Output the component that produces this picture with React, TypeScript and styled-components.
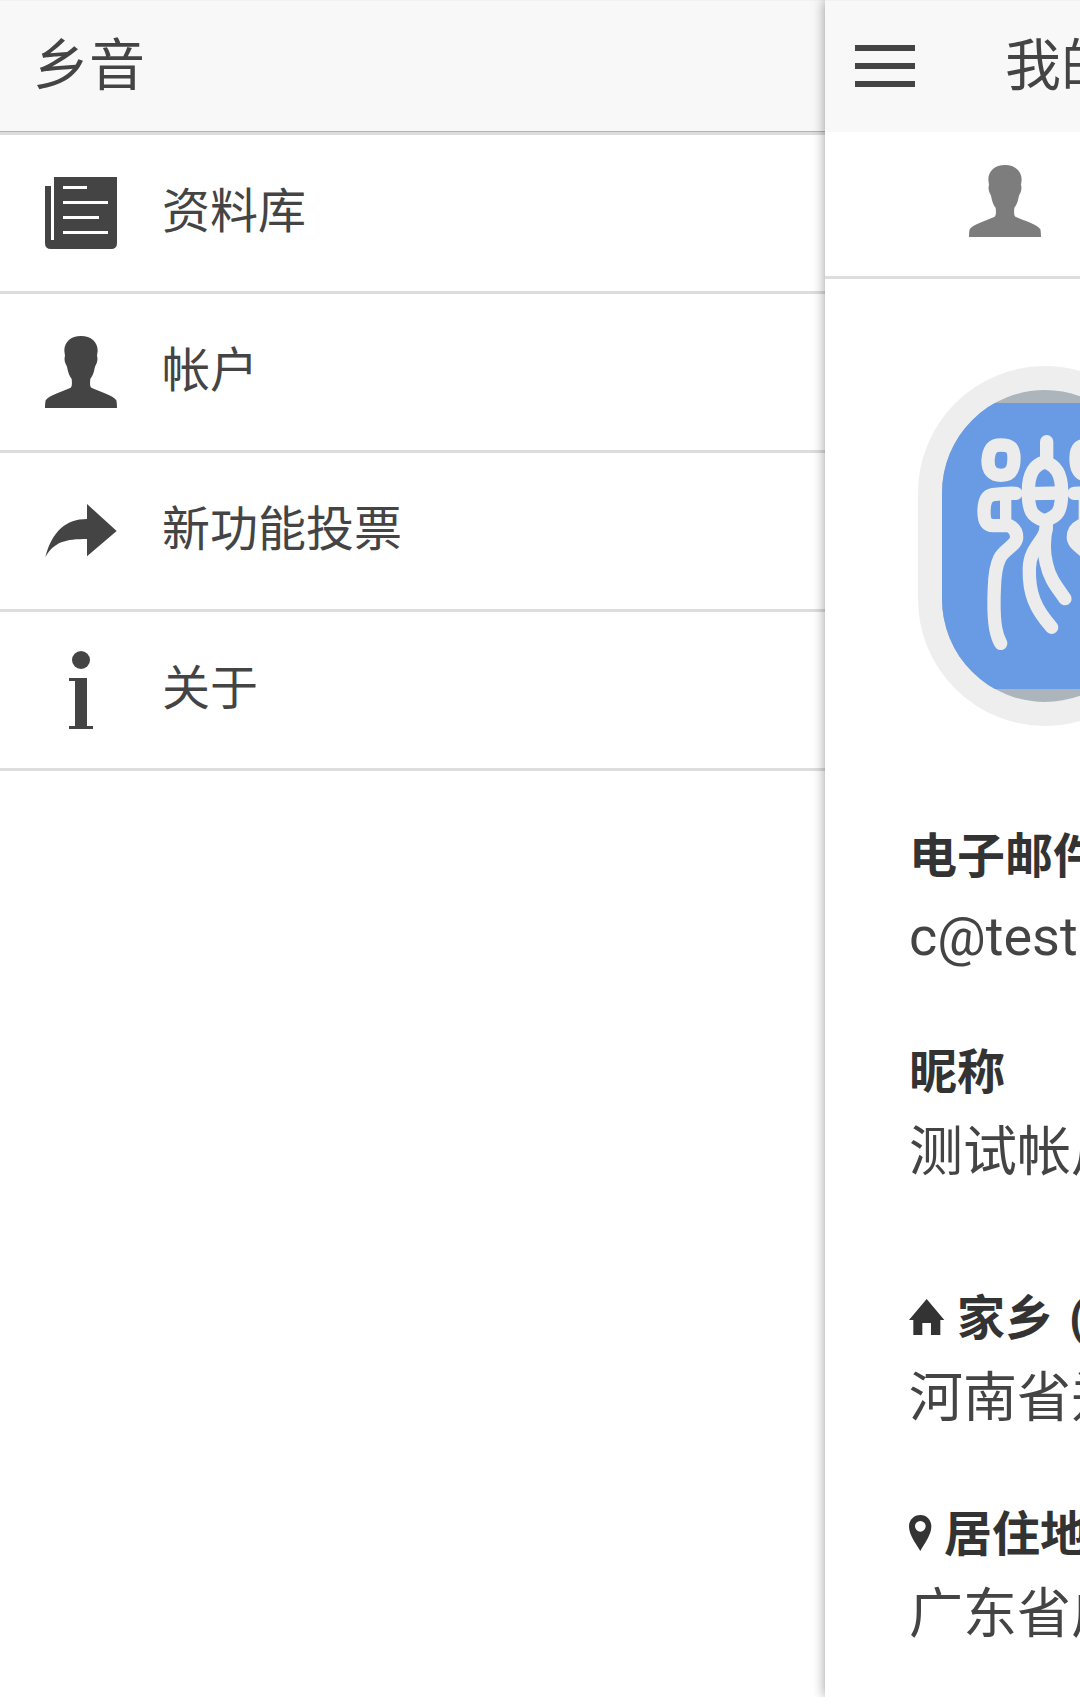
import React from "react";
import styled, { createGlobalStyle } from "styled-components";

const GlobalStyle = createGlobalStyle`
  * { box-sizing: border-box; }
  body {
    margin: 0;
    background: #fff;
    color: #444;
    font-family: Roboto, "Noto Sans CJK SC", sans-serif;
  }
`;

const Shell = styled.div`
  display: flex;
  min-height: 100vh;
  overflow: hidden;
`;

const SideMenu = styled.aside`
  flex: 0 0 825px;
  background: #fff;
`;

const Panel = styled.main`
  position: relative;
  flex: 1;
  min-width: 0;
  overflow: hidden;
  white-space: nowrap;
  background: #fff;
  box-shadow: 0 0 12px rgba(0, 0, 0, 0.4);
`;

const Bar = styled.header<{ $ruled?: boolean; $inset: number }>`
  display: flex;
  align-items: center;
  gap: 90px;
  height: 132px;
  padding-left: ${(p) => p.$inset}px;
  background: linear-gradient(#f2f2f2, #f2f2f2 1px, #f8f8f8 1px);
  border-bottom: ${(p) => (p.$ruled ? "1px solid #b2b2b2" : "0")};
`;

const Title = styled.h1`
  margin: 0;
  font-size: 56px;
  font-weight: 400;
  line-height: 130px;
`;

const MenuList = styled.ul`
  margin: 0;
  padding: 0;
  list-style: none;
  border-top: 3px solid #ddd;
`;

const MenuLink = styled.a`
  display: flex;
  align-items: center;
  gap: 45px;
  height: 159px;
  padding-left: 45px;
  border-bottom: 3px solid #ddd;
  color: #444;
  font-size: 48px;
  line-height: 72px;
  text-decoration: none;
`;

const MenuText = styled.span`
  padding-bottom: 2px;
`;

const Icon = styled.svg`
  display: block;
  flex: none;
  width: 72px;
  height: 72px;
  overflow: visible;
  fill: currentColor;
`;

const MenuButton = styled.button`
  display: flex;
  flex: none;
  flex-direction: column;
  gap: 12px;
  width: 60px;
  padding: 0;
  border: 0;
  background: none;
`;

const Stripe = styled.span`
  height: 6px;
  background: #444;
`;

const Tabs = styled.nav`
  display: flex;
  height: 147px;
  border-bottom: 3px solid #ddd;
`;

const Tab = styled.button`
  display: flex;
  align-items: flex-start;
  padding: 33px 0 0 144px;
  border: 0;
  background: none;
  color: #7d7d7d;
`;

const Profile = styled.section`
  padding: 87px 0 0 84px;
`;

const Avatar = styled.div`
  display: flex;
  align-items: center;
  width: 254px;
  height: 360px;
  margin: 0 0 91px 9px;
  overflow: hidden;
  border: 24px solid #eee;
  border-radius: 127px;
  background: #adb5bc;
`;

const Logo = styled.svg`
  display: block;
  flex: none;
  width: 206px;
  height: 286px;
  background: #699ae4;
`;

const Fields = styled.dl`
  display: flex;
  flex-direction: column;
  gap: 86px;
  margin: 0;
`;

const FieldGroup = styled.div`
  display: flex;
  flex-direction: column;
  gap: 56px;
`;

const Label = styled.dt`
  display: flex;
  align-items: center;
  gap: 12px;
  color: #333;
  font-size: 48px;
  font-weight: 700;
  line-height: 80px;
`;

const LabelNote = styled.span`
  padding-left: 4px;
`;

const Value = styled.dd`
  margin: 0;
  font-size: 54px;
  line-height: 80px;
`;

const LabelIcon = styled.svg<{ $width: number }>`
  flex: none;
  width: ${(p) => p.$width}px;
  height: 36px;
  margin-bottom: 4px;
  fill: currentColor;
`;

const PaperIcon = () => (
  <Icon viewBox="0 0 216 216" aria-hidden="true">
    <path
      fillRule="evenodd"
      d="M27 0H216V198Q216 216 198 216H18Q0 216 0 198V27H18V189H27ZM54 27V36H126V27ZM54 72V81H189V72ZM54 117V126H162V117ZM54 162V171H189V162Z"
    />
  </Icon>
);

const PersonIcon = () => (
  <Icon viewBox="0 0 216 216" aria-hidden="true">
    <path d="M108 0C138 0 158 18 158 44L156 60C158 64 158 74 155 82C150 90 149 96 147 106C143 120 139 124 136 129C135 138 134 151 139 155C166 168 204 177 214 193C215 197 216 205 216 216H0C0 205 1 197 2 193C12 177 50 168 77 155C82 151 81 138 80 129C77 124 73 120 69 106C67 96 66 90 61 82C58 74 58 64 60 60L58 44C58 18 78 0 108 0Z" />
  </Icon>
);

const ForwardIcon = () => (
  <Icon viewBox="0 0 216 216" aria-hidden="true">
    <path d="M126 27L215 108L126 184V132C62 132 27 140 1 187C21 108 64 72 126 72Z" />
  </Icon>
);

const InfoIcon = () => (
  <Icon viewBox="0 0 216 216" aria-hidden="true">
    <circle cx="108" cy="18" r="27" />
    <path d="M72 72H126V216H144V225H72V216H90V81H72Z" />
  </Icon>
);

const HomeIcon = () => (
  <LabelIcon $width={36} viewBox="0 0 108 108" aria-hidden="true">
    <path d="M53 0L106 63H94V108H66V72H40V108H13V63H0Z" />
  </LabelIcon>
);

const PinIcon = () => (
  <LabelIcon $width={23} viewBox="0 0 69 108" aria-hidden="true">
    <path
      fillRule="evenodd"
      d="M34 0C53 0 67 15 67 34C67 60 47 85 34 108C20 85 0 60 0 34C0 15 15 0 34 0ZM34 18A16 16 0 1 0 34 50A16 16 0 1 0 34 18Z"
    />
  </LabelIcon>
);

const LogoSide = () => (
  <>
    <path d="M302 285C330 285 342 292 342 325C342 360 330 376 303 376C276 376 264 360 264 332C266 298 276 285 302 285Z" />
    <path d="M348 430C330 429 300 431 278 434C256 438 252 460 252 485C252 512 257 526 280 527H328C342 534 350 546 350 562C350 586 312 598 299 625C286 650 284 680 283 715C281 760 281 800 287 835Q292 862 302 880" />
    <path d="M317 435V526" strokeWidth="34" />
  </>
);

const AvatarLogo = () => (
  <Logo viewBox="126 159 618 858" role="img" aria-label="头像">
    <g fill="none" stroke="#ececec" strokeWidth="40" strokeLinecap="round" strokeLinejoin="round">
      <LogoSide />
      <g transform="translate(870 0) scale(-1 1)">
        <LogoSide />
      </g>
      <path d="M440 275V335" />
      <path d="M434 336C398 346 385 375 385 425C385 484 396 500 434 512C474 500 485 484 485 425C485 375 470 346 434 336Z" />
      <path d="M385 431L485 429" />
      <path d="M439 530C439 570 389 590 388 655C386 730 405 776 455 832" />
      <path d="M439 530C431 570 429 600 439 640C450 690 472 712 495 746" />
    </g>
  </Logo>
);

const menuItems = [
  { label: "资料库", Glyph: PaperIcon },
  { label: "帐户", Glyph: PersonIcon },
  { label: "新功能投票", Glyph: ForwardIcon },
  { label: "关于", Glyph: InfoIcon },
];

export default function App() {
  return (
    <>
      <GlobalStyle />
      <Shell>
        <SideMenu>
          <Bar $ruled $inset={33}>
            <Title>乡音</Title>
          </Bar>
          <MenuList>
            {menuItems.map(({ label, Glyph }) => (
              <li key={label}>
                <MenuLink href="#">
                  <Glyph />
                  <MenuText>{label}</MenuText>
                </MenuLink>
              </li>
            ))}
          </MenuList>
        </SideMenu>
        <Panel>
          <Bar $inset={30}>
            <MenuButton type="button" aria-label="菜单">
              <Stripe />
              <Stripe />
              <Stripe />
            </MenuButton>
            <Title as="h2">我的</Title>
          </Bar>
          <Tabs>
            <Tab type="button" aria-label="帐户">
              <PersonIcon />
            </Tab>
          </Tabs>
          <Profile>
            <Avatar>
              <AvatarLogo />
            </Avatar>
            <Fields>
              <FieldGroup>
                <div>
                  <Label>电子邮件</Label>
                  <Value>c@test</Value>
                </div>
                <div>
                  <Label>昵称</Label>
                  <Value>测试帐户</Value>
                </div>
              </FieldGroup>
              <FieldGroup>
                <div>
                  <Label>
                    <HomeIcon />
                    <span>家乡</span>
                    <LabelNote>(</LabelNote>
                  </Label>
                  <Value>河南省郑</Value>
                </div>
                <div>
                  <Label>
                    <PinIcon />
                    <span>居住地</span>
                  </Label>
                  <Value>广东省广</Value>
                </div>
              </FieldGroup>
            </Fields>
          </Profile>
        </Panel>
      </Shell>
    </>
  );
}
